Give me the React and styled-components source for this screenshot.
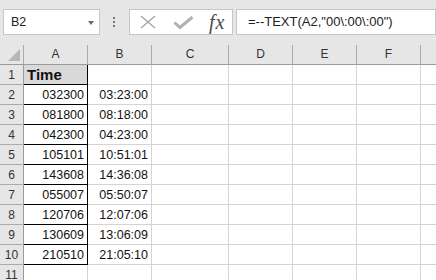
import React from "react";
import styled, { createGlobalStyle } from "styled-components";

const Global = createGlobalStyle`
  html, body { margin: 0; padding: 0; background: #e6e6e6; }
  #root { width: 436px; height: 280px; overflow: hidden; }
`;

const Page = styled.div`
  width: 436px;
  height: 280px;
  overflow: hidden;
  background: #e6e6e6;
  display: flex;
  flex-direction: column;
  font-family: "Liberation Sans", Arial, sans-serif;
`;

const Toolbar = styled.div`
  height: 45px;
  flex: none;
  display: flex;
  align-items: flex-start;
  padding: 9px 0 0 3px;
  box-sizing: border-box;
`;

const NameBox = styled.div`
  width: 102px;
  height: 26px;
  box-sizing: border-box;
  background: #fff;
  border: 1px solid #c6c6c6;
  display: flex;
  align-items: center;
  justify-content: space-between;
  padding: 0 5px 0 7px;
  font-size: 12.5px;
  line-height: 24px;
  color: #222;
`;

const DropArrow = styled.span`
  width: 0;
  height: 0;
  border-left: 3.5px solid transparent;
  border-right: 3.5px solid transparent;
  border-top: 4px solid #6a6a6a;
  margin-top: 1px;
`;

const Gripper = styled.div`
  width: 31px;
  height: 26px;
  display: flex;
  flex-direction: column;
  align-items: center;
  justify-content: center;
  gap: 2px;
`;

const Dot = styled.span`
  width: 2px;
  height: 2px;
  background: #777;
`;

const FxButtons = styled.div`
  width: 110px;
  height: 26px;
  box-sizing: border-box;
  background: #fff;
  border: 1px solid #c6c6c6;
  display: flex;
  align-items: center;
  padding-left: 10px;
`;

const IconSlot = styled.span`
  display: flex;
  align-items: center;
  justify-content: center;
  margin-right: ${(p) => p.$mr || 0}px;
`;

const FxLabel = styled.span`
  font-family: "Liberation Serif", "Times New Roman", serif;
  font-style: italic;
  font-size: 20px;
  line-height: 24px;
  color: #4a4a4a;
  letter-spacing: 1px;
  margin-top: -1px;
`;

const FormulaInput = styled.div`
  margin-left: 3px;
  width: 200px;
  flex: none;
  height: 26px;
  box-sizing: border-box;
  background: #fff;
  border: 1px solid #c6c6c6;
  padding-left: 11px;
  font-size: 13px;
  line-height: 24px;
  color: #222;
  white-space: nowrap;
`;

const Sheet = styled.div`
  display: grid;
  grid-template-columns: 24px 64px 64px 77px 64px 64px 64px 64px;
  grid-auto-rows: 20px;
  background: #fff;
  flex: none;
`;

const Corner = styled.div`
  background: #e6e6e6;
  border-right: 1px solid #ababab;
  border-bottom: 1px solid #9b9b9b;
  box-sizing: border-box;
  display: flex;
  align-items: flex-end;
  justify-content: flex-end;
  padding: 0 3px 3px 0;
`;

const ColHeader = styled.div`
  background: #e6e6e6;
  border-right: 1px solid #ababab;
  border-bottom: 1px solid #9b9b9b;
  box-sizing: border-box;
  text-align: center;
  font-size: 12px;
  line-height: 19px;
  color: #333;
`;

const RowHeader = styled.div`
  background: #e6e6e6;
  border-right: 1px solid #9b9b9b;
  border-bottom: 1px solid #ababab;
  box-sizing: border-box;
  text-align: center;
  font-size: 12px;
  line-height: 18px;
  padding-top: 1px;
  color: #333;
`;

const Cell = styled.div`
  box-sizing: border-box;
  border-right: 1px solid ${(p) => (p.$boxed ? "#000" : "#d4d4d4")};
  border-bottom: 1px solid ${(p) => (p.$boxed ? "#000" : "#d4d4d4")};
  background: ${(p) => (p.$fill ? "#d9d9d9" : "#fff")};
  text-align: ${(p) => (p.$left ? "left" : "right")};
  padding: ${(p) => (p.$bold ? "0 3px 0 3px" : "1px 3px 0 3px")};
  font-size: ${(p) => (p.$bold ? "15px" : "12.5px")};
  font-weight: ${(p) => (p.$bold ? 700 : 400)};
  line-height: ${(p) => (p.$bold ? "19px" : "18px")};
  color: #111;
  white-space: nowrap;
  overflow: hidden;
`;

const rows = [
  ["032300", "03:23:00"],
  ["081800", "08:18:00"],
  ["042300", "04:23:00"],
  ["105101", "10:51:01"],
  ["143608", "14:36:08"],
  ["055007", "05:50:07"],
  ["120706", "12:07:06"],
  ["130609", "13:06:09"],
  ["210510", "21:05:10"],
];

const cols = ["A", "B", "C", "D", "E", "F", "G"];

function Blank({ n }) {
  return Array.from({ length: n }, (_, i) => <Cell key={i} />);
}

export default function App() {
  return (
    <Page>
      <Global />
      <Toolbar>
        <NameBox>
          <span>B2</span>
          <DropArrow />
        </NameBox>
        <Gripper>
          <Dot />
          <Dot />
          <Dot />
        </Gripper>
        <FxButtons>
          <IconSlot $mr={17}>
            <svg width="16" height="14" viewBox="0 0 16 14">
              <path d="M1 1 L15 13 M15 1 L1 13" stroke="#a9a9a9" strokeWidth="1.6" fill="none" />
            </svg>
          </IconSlot>
          <IconSlot $mr={15}>
            <svg width="21" height="13" viewBox="0 0 21 13">
              <path d="M1.5 6.5 L7 11.5 L19.5 1" stroke="#b0b0b0" strokeWidth="3" fill="none" />
            </svg>
          </IconSlot>
          <FxLabel>fx</FxLabel>
        </FxButtons>
        <FormulaInput>=--TEXT(A2,"00\:00\:00")</FormulaInput>
      </Toolbar>
      <Sheet>
        <Corner>
          <svg width="12" height="12" viewBox="0 0 12 12">
            <path d="M12 0 L12 12 L0 12 Z" fill="#b7b7b7" />
          </svg>
        </Corner>
        {cols.map((c) => (
          <ColHeader key={c}>{c}</ColHeader>
        ))}

        <RowHeader>1</RowHeader>
        <Cell $boxed $fill $bold $left>
          Time
        </Cell>
        <Blank n={6} />

        {rows.map(([a, b], i) => (
          <React.Fragment key={a}>
            <RowHeader>{i + 2}</RowHeader>
            <Cell $boxed>{a}</Cell>
            <Cell>{b}</Cell>
            <Blank n={5} />
          </React.Fragment>
        ))}

        <RowHeader>11</RowHeader>
        <Blank n={7} />
      </Sheet>
    </Page>
  );
}
